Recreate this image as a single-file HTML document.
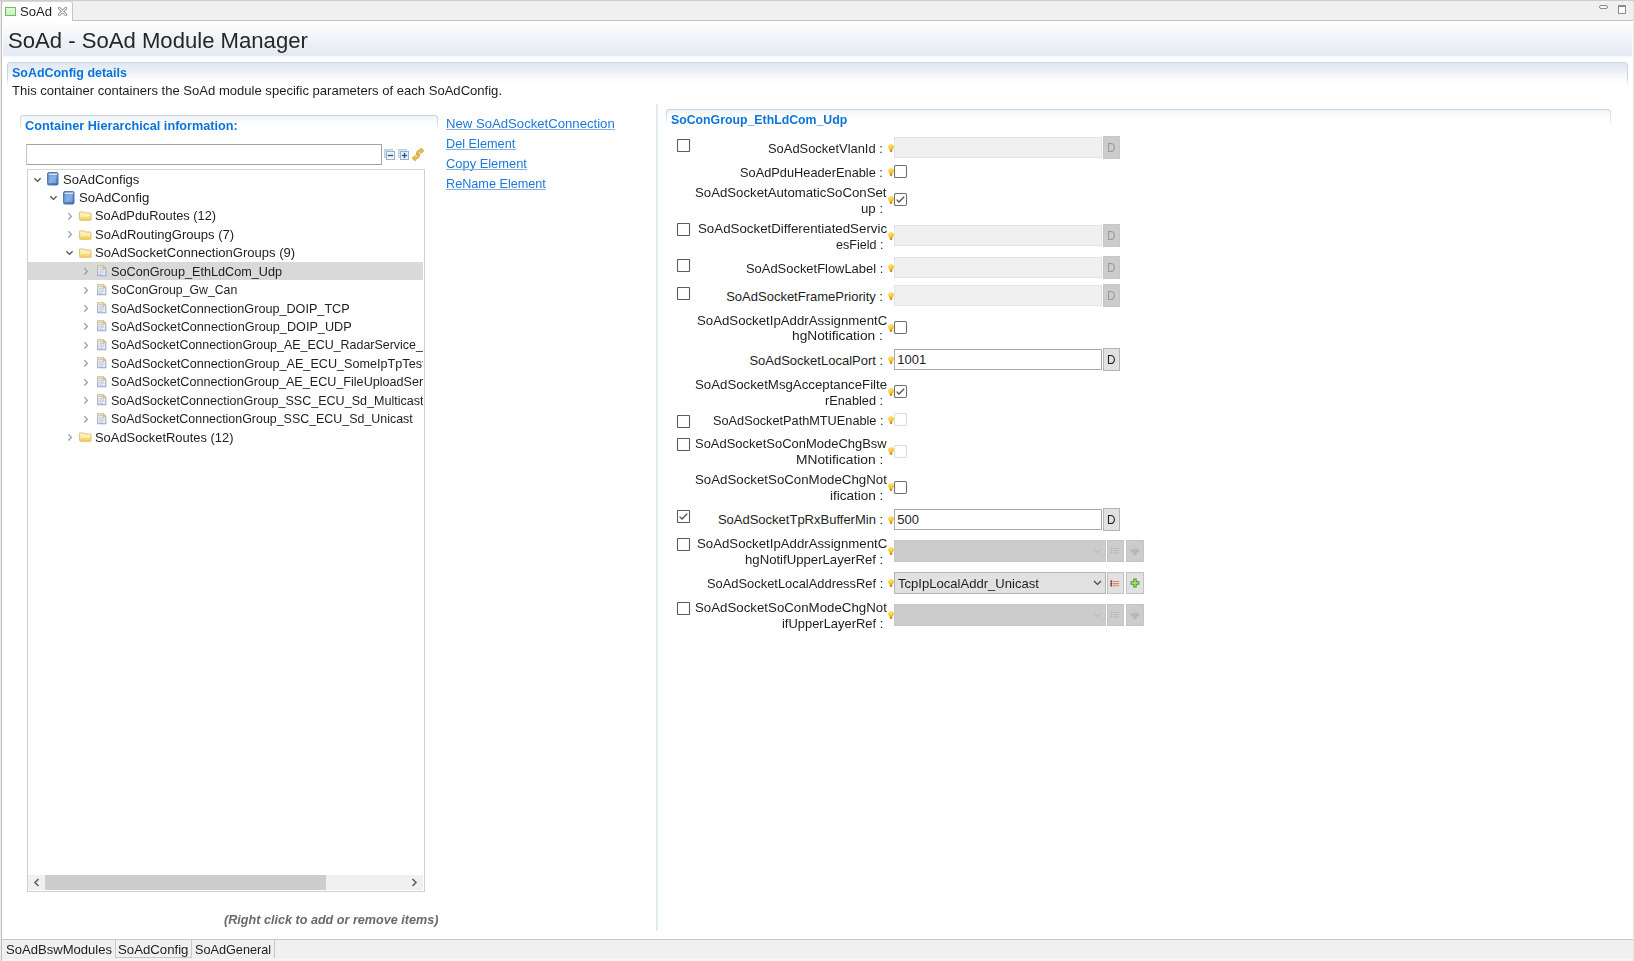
<!DOCTYPE html>
<html><head><meta charset="utf-8"><style>
html,body{margin:0;padding:0;}
body{width:1634px;height:961px;overflow:hidden;position:relative;background:#fff;font-family:"Liberation Sans",sans-serif;}
.a{position:absolute;}
.t{position:absolute;white-space:nowrap;transform-origin:0 0;}
svg.a{overflow:visible}
</style></head><body>
<div class="a" style="left:0px;top:0px;width:1634px;height:1px;background:#cdcdcd"></div>
<div class="a" style="left:0px;top:1px;width:1634px;height:1px;background:#dadada"></div>
<div class="a" style="left:73px;top:1px;width:1560px;height:19px;background:#f0f0f0"></div>
<div class="a" style="left:73px;top:20px;width:1560px;height:1px;background:#c4c4c4"></div>
<div class="a" style="left:1px;top:1px;width:72px;height:20px;background:#fff;border-top:1px solid #d8d8d8;border-left:1px solid #bdbdbd;border-right:1px solid #c4c4c4;border-radius:3px 3px 0 0;box-sizing:border-box;border-bottom:none"></div>
<div class="a" style="left:0px;top:2px;width:1px;height:959px;background:#ececec"></div>
<div class="a" style="left:1px;top:2px;width:1px;height:959px;background:#bdbdbd"></div>
<div class="a" style="left:1633px;top:2px;width:1px;height:959px;background:#e6e6e6"></div>
<div class="a" style="left:5px;top:7px;width:11px;height:9px;border:1px solid #6cc060;background:linear-gradient(#e6f6e0,#c9eebf);box-sizing:border-box"></div>
<div class="t" style="left:19.50px;top:-0.90px;font-size:13px;line-height:26px;color:#1e1e1e;transform:scaleX(1.0079);">SoAd</div>
<svg class="a" style="left:57px;top:6px" width="11" height="11" viewBox="0 0 11 11"><path d="M2.2 2.2 L8.8 8.8 M8.8 2.2 L2.2 8.8" stroke="#8e8e8e" stroke-width="2.8" stroke-linecap="round" fill="none"/><path d="M2.2 2.2 L8.8 8.8 M8.8 2.2 L2.2 8.8" stroke="#fff" stroke-width="1.1" stroke-linecap="round" fill="none"/></svg>
<div class="a" style="left:1599px;top:5px;width:9px;height:4px;border:1px solid #8a8a8a;border-radius:2px;box-sizing:border-box;background:#fafafa"></div>
<div class="a" style="left:1618px;top:5px;width:8px;height:9px;border:1px solid #8a8a8a;border-top-width:2px;border-radius:1px;box-sizing:border-box;background:#fff"></div>
<div class="a" style="left:3px;top:21px;width:1629px;height:37px;background:linear-gradient(#ffffff 0px,#fdfdfe 2px,#e3e9f2 34px,#e6ecf3 34.5px,#f2f5f8 35px,#fcfdfe 37px)"></div>
<div class="t" style="left:8.40px;top:18.50px;font-size:22px;line-height:44px;color:#262626;transform:scaleX(1.0048);">SoAd - SoAd Module Manager</div>
<div class="a" style="left:7px;top:62px;width:1621px;height:28px;border:1px solid #c6d4e4;border-bottom:none;border-radius:3px 3px 0 0;background:linear-gradient(#dfe7f1,#ffffff 75%);box-sizing:border-box;-webkit-mask-image:linear-gradient(#000 55%,transparent 85%)"></div>
<div class="t" style="left:12.20px;top:59.60px;font-size:13px;line-height:26px;font-weight:700;color:#0a74da;transform:scaleX(0.9577);">SoAdConfig details</div>
<div class="t" style="left:12.20px;top:77.60px;font-size:13px;line-height:26px;color:#1e1e1e;transform:scaleX(1.0046);">This container containers the SoAd module specific parameters of each SoAdConfig.</div>
<div class="a" style="left:20px;top:115px;width:418px;height:18px;border:1px solid #c5d3e4;border-bottom:none;border-radius:3px 3px 0 0;background:linear-gradient(#eef3f8,#ffffff 50%);box-sizing:border-box;-webkit-mask-image:linear-gradient(#000 15%,transparent 95%)"></div>
<div class="t" style="left:24.60px;top:113.10px;font-size:13px;line-height:26px;font-weight:700;color:#0a74da;transform:scaleX(0.9756);">Container Hierarchical information:</div>
<div class="a" style="left:26px;top:144px;width:356px;height:21px;border:1px solid #a4a4a4;border-left-color:#c4c4c4;border-radius:1px;background:#fff;box-sizing:border-box"></div>
<svg class="a" style="left:384px;top:148.5px" width="12" height="12" viewBox="0 0 12 12"><rect x="0.5" y="0.5" width="8" height="8" fill="#cfe2f3" stroke="#bcd0e6"/><rect x="2.5" y="2.5" width="8" height="8" fill="#eaf6fd" stroke="#9fb0c6"/><path d="M3.8 6.5 H9.2" stroke="#245b8f" stroke-width="1.4"/></svg>
<svg class="a" style="left:398px;top:148.5px" width="12" height="12" viewBox="0 0 12 12"><rect x="0.5" y="0.5" width="8" height="8" fill="#cfe2f3" stroke="#bcd0e6"/><rect x="2.5" y="2.5" width="8" height="8" fill="#eaf6fd" stroke="#9fb0c6"/><path d="M3.8 6.5 H9.2" stroke="#245b8f" stroke-width="1.4"/><path d="M6.5 3.8 V9.2" stroke="#245b8f" stroke-width="1.4"/></svg>
<svg class="a" style="left:411px;top:147px" width="14" height="15" viewBox="0 0 14 15"><g stroke="#c58f24" stroke-width="0.6" fill="#ebc24a" stroke-linejoin="round"><path d="M5.2 8 C5 4.5 7 2.6 10 2.8 L9.6 1 L13 3.8 L9.8 6.6 L9.9 4.8 C8.2 4.7 7.2 5.8 7.4 8 Z"/><path d="M8.8 7 C9 10.5 7 12.4 4 12.2 L4.4 14 L1 11.2 L4.2 8.4 L4.1 10.2 C5.8 10.3 6.8 9.2 6.6 7 Z"/></g></svg>
<div class="a" style="left:27px;top:169px;width:398px;height:723px;border:1px solid #cfd0d4;border-top-color:#d8d8d8;background:#fff;box-sizing:border-box"></div>
<div class="a" style="left:28px;top:262px;width:395px;height:18px;background:#d9d9d9"></div>
<div class="a" style="left:0;top:0;width:1634px;height:961px;clip-path:inset(170px 1211px 87px 28px)">
<svg class="a" style="left:33px;top:176.5px" width="9" height="6" viewBox="0 0 9 6"><path d="M1.4 1.3 L4.5 4.4 L7.6 1.3" stroke="#505050" stroke-width="1.3" fill="none"/></svg>
<svg class="a" style="left:47px;top:172.3px" width="12" height="14" viewBox="0 0 12 14"><defs><linearGradient id="bk" x1="0" y1="0" x2="1" y2="1"><stop offset="0" stop-color="#5d8fd0"/><stop offset="0.5" stop-color="#77a3dc"/><stop offset="1" stop-color="#3d6db3"/></linearGradient></defs><rect x="0.6" y="0.6" width="10.4" height="12.4" rx="1.2" fill="url(#bk)" stroke="#4a72ab" stroke-width="1"/><rect x="1.8" y="1.7" width="8.2" height="1.2" fill="#e9f0f9"/><rect x="2.6" y="3.6" width="6.5" height="8" fill="#9cc0ea" opacity="0.45"/><rect x="0.8" y="11" width="10" height="1.6" fill="#3f6aa8" opacity="0.6"/></svg>
<div class="t" style="left:63.00px;top:166.60px;font-size:13px;line-height:26px;color:#1e1e1e;transform:scaleX(1.0069);">SoAdConfigs</div>
<svg class="a" style="left:49px;top:194.9px" width="9" height="6" viewBox="0 0 9 6"><path d="M1.4 1.3 L4.5 4.4 L7.6 1.3" stroke="#505050" stroke-width="1.3" fill="none"/></svg>
<svg class="a" style="left:63px;top:190.7px" width="12" height="14" viewBox="0 0 12 14"><defs><linearGradient id="bk" x1="0" y1="0" x2="1" y2="1"><stop offset="0" stop-color="#5d8fd0"/><stop offset="0.5" stop-color="#77a3dc"/><stop offset="1" stop-color="#3d6db3"/></linearGradient></defs><rect x="0.6" y="0.6" width="10.4" height="12.4" rx="1.2" fill="url(#bk)" stroke="#4a72ab" stroke-width="1"/><rect x="1.8" y="1.7" width="8.2" height="1.2" fill="#e9f0f9"/><rect x="2.6" y="3.6" width="6.5" height="8" fill="#9cc0ea" opacity="0.45"/><rect x="0.8" y="11" width="10" height="1.6" fill="#3f6aa8" opacity="0.6"/></svg>
<div class="t" style="left:79.00px;top:185.03px;font-size:13px;line-height:26px;color:#1e1e1e;transform:scaleX(1.0133);">SoAdConfig</div>
<svg class="a" style="left:67px;top:211.9px" width="6" height="9" viewBox="0 0 6 9"><path d="M1.4 1.3 L4.4 4.4 L1.4 7.5" stroke="#9c9c9c" stroke-width="1.25" fill="none"/></svg>
<svg class="a" style="left:79px;top:211.2px" width="13" height="10" viewBox="0 0 13 10"><defs><linearGradient id="fd" x1="0" y1="0" x2="0" y2="1"><stop offset="0" stop-color="#fdf8e6"/><stop offset="0.45" stop-color="#faeaa0"/><stop offset="1" stop-color="#f2cf3c"/></linearGradient></defs><path d="M0.6 1 H5 L6 2 H11.4 Q12 2 12 2.6 V8.6 Q12 9.3 11.3 9.3 H1.3 Q0.6 9.3 0.6 8.6 Z" fill="url(#fd)" stroke="#e5bd78" stroke-width="1"/><path d="M1.6 5.2 Q4 5.6 6 4.4 H11" stroke="#fff6d0" stroke-width="1" fill="none"/></svg>
<div class="t" style="left:95.00px;top:203.46px;font-size:13px;line-height:26px;color:#1e1e1e;transform:scaleX(0.9856);">SoAdPduRoutes (12)</div>
<svg class="a" style="left:67px;top:230.3px" width="6" height="9" viewBox="0 0 6 9"><path d="M1.4 1.3 L4.4 4.4 L1.4 7.5" stroke="#9c9c9c" stroke-width="1.25" fill="none"/></svg>
<svg class="a" style="left:79px;top:229.6px" width="13" height="10" viewBox="0 0 13 10"><defs><linearGradient id="fd" x1="0" y1="0" x2="0" y2="1"><stop offset="0" stop-color="#fdf8e6"/><stop offset="0.45" stop-color="#faeaa0"/><stop offset="1" stop-color="#f2cf3c"/></linearGradient></defs><path d="M0.6 1 H5 L6 2 H11.4 Q12 2 12 2.6 V8.6 Q12 9.3 11.3 9.3 H1.3 Q0.6 9.3 0.6 8.6 Z" fill="url(#fd)" stroke="#e5bd78" stroke-width="1"/><path d="M1.6 5.2 Q4 5.6 6 4.4 H11" stroke="#fff6d0" stroke-width="1" fill="none"/></svg>
<div class="t" style="left:95.00px;top:221.89px;font-size:13px;line-height:26px;color:#1e1e1e;transform:scaleX(1.0032);">SoAdRoutingGroups (7)</div>
<svg class="a" style="left:65px;top:250.2px" width="9" height="6" viewBox="0 0 9 6"><path d="M1.4 1.3 L4.5 4.4 L7.6 1.3" stroke="#505050" stroke-width="1.3" fill="none"/></svg>
<svg class="a" style="left:79px;top:248.0px" width="13" height="10" viewBox="0 0 13 10"><defs><linearGradient id="fd" x1="0" y1="0" x2="0" y2="1"><stop offset="0" stop-color="#fdf8e6"/><stop offset="0.45" stop-color="#faeaa0"/><stop offset="1" stop-color="#f2cf3c"/></linearGradient></defs><path d="M0.6 1 H5 L6 2 H11.4 Q12 2 12 2.6 V8.6 Q12 9.3 11.3 9.3 H1.3 Q0.6 9.3 0.6 8.6 Z" fill="url(#fd)" stroke="#e5bd78" stroke-width="1"/><path d="M1.6 5.2 Q4 5.6 6 4.4 H11" stroke="#fff6d0" stroke-width="1" fill="none"/></svg>
<div class="t" style="left:95.00px;top:240.32px;font-size:13px;line-height:26px;color:#1e1e1e;transform:scaleX(1.0035);">SoAdSocketConnectionGroups (9)</div>
<svg class="a" style="left:83px;top:267.1px" width="6" height="9" viewBox="0 0 6 9"><path d="M1.4 1.3 L4.4 4.4 L1.4 7.5" stroke="#9c9c9c" stroke-width="1.25" fill="none"/></svg>
<svg class="a" style="left:97px;top:265.1px" width="10" height="12" viewBox="0 0 10 12"><defs><linearGradient id="fs" x1="0" y1="0" x2="0" y2="1"><stop offset="0" stop-color="#cdb77c"/><stop offset="1" stop-color="#93a5c8"/></linearGradient></defs><path d="M0.7 0.7 H6.3 L8.8 3.2 V10.8 H0.7 Z" fill="#edf2fa" stroke="url(#fs)" stroke-width="1.1"/><path d="M6 0.9 V3.5 H8.6" fill="#e0bf6a" stroke="#d2b46e" stroke-width="0.8"/><path d="M2.2 2.6 H5 M2.2 4.8 H7.3 M2.2 7 H7.3 M2.2 9.2 H6" stroke="#a8b8d8" stroke-width="0.9"/></svg>
<div class="t" style="left:111.00px;top:258.75px;font-size:13px;line-height:26px;color:#1e1e1e;transform:scaleX(0.9742);">SoConGroup_EthLdCom_Udp</div>
<svg class="a" style="left:83px;top:285.6px" width="6" height="9" viewBox="0 0 6 9"><path d="M1.4 1.3 L4.4 4.4 L1.4 7.5" stroke="#9c9c9c" stroke-width="1.25" fill="none"/></svg>
<svg class="a" style="left:97px;top:283.6px" width="10" height="12" viewBox="0 0 10 12"><defs><linearGradient id="fs" x1="0" y1="0" x2="0" y2="1"><stop offset="0" stop-color="#cdb77c"/><stop offset="1" stop-color="#93a5c8"/></linearGradient></defs><path d="M0.7 0.7 H6.3 L8.8 3.2 V10.8 H0.7 Z" fill="#edf2fa" stroke="url(#fs)" stroke-width="1.1"/><path d="M6 0.9 V3.5 H8.6" fill="#e0bf6a" stroke="#d2b46e" stroke-width="0.8"/><path d="M2.2 2.6 H5 M2.2 4.8 H7.3 M2.2 7 H7.3 M2.2 9.2 H6" stroke="#a8b8d8" stroke-width="0.9"/></svg>
<div class="t" style="left:111.00px;top:277.18px;font-size:13px;line-height:26px;color:#1e1e1e;transform:scaleX(0.9443);">SoConGroup_Gw_Can</div>
<svg class="a" style="left:83px;top:304.0px" width="6" height="9" viewBox="0 0 6 9"><path d="M1.4 1.3 L4.4 4.4 L1.4 7.5" stroke="#9c9c9c" stroke-width="1.25" fill="none"/></svg>
<svg class="a" style="left:97px;top:302.0px" width="10" height="12" viewBox="0 0 10 12"><defs><linearGradient id="fs" x1="0" y1="0" x2="0" y2="1"><stop offset="0" stop-color="#cdb77c"/><stop offset="1" stop-color="#93a5c8"/></linearGradient></defs><path d="M0.7 0.7 H6.3 L8.8 3.2 V10.8 H0.7 Z" fill="#edf2fa" stroke="url(#fs)" stroke-width="1.1"/><path d="M6 0.9 V3.5 H8.6" fill="#e0bf6a" stroke="#d2b46e" stroke-width="0.8"/><path d="M2.2 2.6 H5 M2.2 4.8 H7.3 M2.2 7 H7.3 M2.2 9.2 H6" stroke="#a8b8d8" stroke-width="0.9"/></svg>
<div class="t" style="left:111.00px;top:295.61px;font-size:13px;line-height:26px;color:#1e1e1e;transform:scaleX(0.9713);">SoAdSocketConnectionGroup_DOIP_TCP</div>
<svg class="a" style="left:83px;top:322.4px" width="6" height="9" viewBox="0 0 6 9"><path d="M1.4 1.3 L4.4 4.4 L1.4 7.5" stroke="#9c9c9c" stroke-width="1.25" fill="none"/></svg>
<svg class="a" style="left:97px;top:320.4px" width="10" height="12" viewBox="0 0 10 12"><defs><linearGradient id="fs" x1="0" y1="0" x2="0" y2="1"><stop offset="0" stop-color="#cdb77c"/><stop offset="1" stop-color="#93a5c8"/></linearGradient></defs><path d="M0.7 0.7 H6.3 L8.8 3.2 V10.8 H0.7 Z" fill="#edf2fa" stroke="url(#fs)" stroke-width="1.1"/><path d="M6 0.9 V3.5 H8.6" fill="#e0bf6a" stroke="#d2b46e" stroke-width="0.8"/><path d="M2.2 2.6 H5 M2.2 4.8 H7.3 M2.2 7 H7.3 M2.2 9.2 H6" stroke="#a8b8d8" stroke-width="0.9"/></svg>
<div class="t" style="left:111.00px;top:314.04px;font-size:13px;line-height:26px;color:#1e1e1e;transform:scaleX(0.9736);">SoAdSocketConnectionGroup_DOIP_UDP</div>
<svg class="a" style="left:83px;top:340.9px" width="6" height="9" viewBox="0 0 6 9"><path d="M1.4 1.3 L4.4 4.4 L1.4 7.5" stroke="#9c9c9c" stroke-width="1.25" fill="none"/></svg>
<svg class="a" style="left:97px;top:338.9px" width="10" height="12" viewBox="0 0 10 12"><defs><linearGradient id="fs" x1="0" y1="0" x2="0" y2="1"><stop offset="0" stop-color="#cdb77c"/><stop offset="1" stop-color="#93a5c8"/></linearGradient></defs><path d="M0.7 0.7 H6.3 L8.8 3.2 V10.8 H0.7 Z" fill="#edf2fa" stroke="url(#fs)" stroke-width="1.1"/><path d="M6 0.9 V3.5 H8.6" fill="#e0bf6a" stroke="#d2b46e" stroke-width="0.8"/><path d="M2.2 2.6 H5 M2.2 4.8 H7.3 M2.2 7 H7.3 M2.2 9.2 H6" stroke="#a8b8d8" stroke-width="0.9"/></svg>
<div class="t" style="left:111.00px;top:332.47px;font-size:13px;line-height:26px;color:#1e1e1e;transform:scaleX(0.9569);">SoAdSocketConnectionGroup_AE_ECU_RadarService_Provider</div>
<svg class="a" style="left:83px;top:359.3px" width="6" height="9" viewBox="0 0 6 9"><path d="M1.4 1.3 L4.4 4.4 L1.4 7.5" stroke="#9c9c9c" stroke-width="1.25" fill="none"/></svg>
<svg class="a" style="left:97px;top:357.3px" width="10" height="12" viewBox="0 0 10 12"><defs><linearGradient id="fs" x1="0" y1="0" x2="0" y2="1"><stop offset="0" stop-color="#cdb77c"/><stop offset="1" stop-color="#93a5c8"/></linearGradient></defs><path d="M0.7 0.7 H6.3 L8.8 3.2 V10.8 H0.7 Z" fill="#edf2fa" stroke="url(#fs)" stroke-width="1.1"/><path d="M6 0.9 V3.5 H8.6" fill="#e0bf6a" stroke="#d2b46e" stroke-width="0.8"/><path d="M2.2 2.6 H5 M2.2 4.8 H7.3 M2.2 7 H7.3 M2.2 9.2 H6" stroke="#a8b8d8" stroke-width="0.9"/></svg>
<div class="t" style="left:111.00px;top:350.90px;font-size:13px;line-height:26px;color:#1e1e1e;transform:scaleX(0.9715);">SoAdSocketConnectionGroup_AE_ECU_SomeIpTpTest</div>
<svg class="a" style="left:83px;top:377.7px" width="6" height="9" viewBox="0 0 6 9"><path d="M1.4 1.3 L4.4 4.4 L1.4 7.5" stroke="#9c9c9c" stroke-width="1.25" fill="none"/></svg>
<svg class="a" style="left:97px;top:375.7px" width="10" height="12" viewBox="0 0 10 12"><defs><linearGradient id="fs" x1="0" y1="0" x2="0" y2="1"><stop offset="0" stop-color="#cdb77c"/><stop offset="1" stop-color="#93a5c8"/></linearGradient></defs><path d="M0.7 0.7 H6.3 L8.8 3.2 V10.8 H0.7 Z" fill="#edf2fa" stroke="url(#fs)" stroke-width="1.1"/><path d="M6 0.9 V3.5 H8.6" fill="#e0bf6a" stroke="#d2b46e" stroke-width="0.8"/><path d="M2.2 2.6 H5 M2.2 4.8 H7.3 M2.2 7 H7.3 M2.2 9.2 H6" stroke="#a8b8d8" stroke-width="0.9"/></svg>
<div class="t" style="left:111.00px;top:369.33px;font-size:13px;line-height:26px;color:#1e1e1e;transform:scaleX(0.9684);">SoAdSocketConnectionGroup_AE_ECU_FileUploadService</div>
<svg class="a" style="left:83px;top:396.2px" width="6" height="9" viewBox="0 0 6 9"><path d="M1.4 1.3 L4.4 4.4 L1.4 7.5" stroke="#9c9c9c" stroke-width="1.25" fill="none"/></svg>
<svg class="a" style="left:97px;top:394.2px" width="10" height="12" viewBox="0 0 10 12"><defs><linearGradient id="fs" x1="0" y1="0" x2="0" y2="1"><stop offset="0" stop-color="#cdb77c"/><stop offset="1" stop-color="#93a5c8"/></linearGradient></defs><path d="M0.7 0.7 H6.3 L8.8 3.2 V10.8 H0.7 Z" fill="#edf2fa" stroke="url(#fs)" stroke-width="1.1"/><path d="M6 0.9 V3.5 H8.6" fill="#e0bf6a" stroke="#d2b46e" stroke-width="0.8"/><path d="M2.2 2.6 H5 M2.2 4.8 H7.3 M2.2 7 H7.3 M2.2 9.2 H6" stroke="#a8b8d8" stroke-width="0.9"/></svg>
<div class="t" style="left:111.00px;top:387.76px;font-size:13px;line-height:26px;color:#1e1e1e;transform:scaleX(0.9653);">SoAdSocketConnectionGroup_SSC_ECU_Sd_Multicast</div>
<svg class="a" style="left:83px;top:414.6px" width="6" height="9" viewBox="0 0 6 9"><path d="M1.4 1.3 L4.4 4.4 L1.4 7.5" stroke="#9c9c9c" stroke-width="1.25" fill="none"/></svg>
<svg class="a" style="left:97px;top:412.6px" width="10" height="12" viewBox="0 0 10 12"><defs><linearGradient id="fs" x1="0" y1="0" x2="0" y2="1"><stop offset="0" stop-color="#cdb77c"/><stop offset="1" stop-color="#93a5c8"/></linearGradient></defs><path d="M0.7 0.7 H6.3 L8.8 3.2 V10.8 H0.7 Z" fill="#edf2fa" stroke="url(#fs)" stroke-width="1.1"/><path d="M6 0.9 V3.5 H8.6" fill="#e0bf6a" stroke="#d2b46e" stroke-width="0.8"/><path d="M2.2 2.6 H5 M2.2 4.8 H7.3 M2.2 7 H7.3 M2.2 9.2 H6" stroke="#a8b8d8" stroke-width="0.9"/></svg>
<div class="t" style="left:111.00px;top:406.19px;font-size:13px;line-height:26px;color:#1e1e1e;transform:scaleX(0.9554);">SoAdSocketConnectionGroup_SSC_ECU_Sd_Unicast</div>
<svg class="a" style="left:67px;top:433.0px" width="6" height="9" viewBox="0 0 6 9"><path d="M1.4 1.3 L4.4 4.4 L1.4 7.5" stroke="#9c9c9c" stroke-width="1.25" fill="none"/></svg>
<svg class="a" style="left:79px;top:432.3px" width="13" height="10" viewBox="0 0 13 10"><defs><linearGradient id="fd" x1="0" y1="0" x2="0" y2="1"><stop offset="0" stop-color="#fdf8e6"/><stop offset="0.45" stop-color="#faeaa0"/><stop offset="1" stop-color="#f2cf3c"/></linearGradient></defs><path d="M0.6 1 H5 L6 2 H11.4 Q12 2 12 2.6 V8.6 Q12 9.3 11.3 9.3 H1.3 Q0.6 9.3 0.6 8.6 Z" fill="url(#fd)" stroke="#e5bd78" stroke-width="1"/><path d="M1.6 5.2 Q4 5.6 6 4.4 H11" stroke="#fff6d0" stroke-width="1" fill="none"/></svg>
<div class="t" style="left:95.00px;top:424.62px;font-size:13px;line-height:26px;color:#1e1e1e;transform:scaleX(0.9928);">SoAdSocketRoutes (12)</div>
</div>
<div class="a" style="left:28px;top:875px;width:395px;height:15px;background:#f0f0f0"></div>
<div class="a" style="left:45px;top:875px;width:281px;height:15px;background:#cdcdcd"></div>
<svg class="a" style="left:33px;top:878px" width="7" height="9" viewBox="0 0 7 9"><path d="M5.5 1 L2 4.5 L5.5 8" stroke="#606060" stroke-width="1.6" fill="none"/></svg>
<svg class="a" style="left:411px;top:878px" width="7" height="9" viewBox="0 0 7 9"><path d="M1.5 1 L5 4.5 L1.5 8" stroke="#606060" stroke-width="1.6" fill="none"/></svg>
<div class="t" style="left:223.70px;top:906.80px;font-size:13px;line-height:26px;font-weight:700;font-style:italic;color:#6a6a6a;transform:scaleX(0.9701);">(Right click to add or remove items)</div>
<div class="t" style="left:445.90px;top:110.90px;font-size:13px;line-height:26px;color:#1e78dc;transform:scaleX(1.0108);">New SoAdSocketConnection</div>
<div class="a" style="left:446px;top:128.5px;width:169.0px;height:1.4000000000000057px;background:#86b4e8"></div>
<div class="t" style="left:445.90px;top:130.90px;font-size:13px;line-height:26px;color:#1e78dc;transform:scaleX(0.9778);">Del Element</div>
<div class="a" style="left:446px;top:148.5px;width:69.5px;height:1.4000000000000057px;background:#86b4e8"></div>
<div class="t" style="left:445.90px;top:150.90px;font-size:13px;line-height:26px;color:#1e78dc;transform:scaleX(0.9911);">Copy Element</div>
<div class="a" style="left:446px;top:168.5px;width:81.10000000000002px;height:1.4000000000000057px;background:#86b4e8"></div>
<div class="t" style="left:445.90px;top:170.90px;font-size:13px;line-height:26px;color:#1e78dc;transform:scaleX(0.9734);">ReName Element</div>
<div class="a" style="left:446px;top:188.5px;width:100.10000000000002px;height:1.4000000000000057px;background:#86b4e8"></div>
<div class="a" style="left:656px;top:104px;width:2px;height:827px;background:#e1e9f3"></div>
<div class="a" style="left:666px;top:109px;width:945px;height:18px;border:1px solid #c5d3e4;border-bottom:none;border-radius:3px 3px 0 0;background:linear-gradient(#eef3f8,#ffffff 50%);box-sizing:border-box;-webkit-mask-image:linear-gradient(#000 15%,transparent 95%)"></div>
<div class="t" style="left:671.20px;top:107.10px;font-size:13px;line-height:26px;font-weight:700;color:#0a74da;transform:scaleX(0.9459);">SoConGroup_EthLdCom_Udp</div>
<div class="a" style="left:2px;top:939px;width:1631px;height:1px;background:#c8c8c8"></div>
<div class="a" style="left:2px;top:940px;width:1631px;height:19px;background:#f0f0f0"></div>
<div class="a" style="left:2px;top:959px;width:1631px;height:2px;background:#f7f7f7"></div>
<div class="a" style="left:115px;top:940px;width:1px;height:18px;background:#c8c8c8"></div>
<div class="a" style="left:191px;top:940px;width:1px;height:18px;background:#c8c8c8"></div>
<div class="a" style="left:274px;top:940px;width:1px;height:18px;background:#c8c8c8"></div>
<div class="a" style="left:116px;top:957px;width:75px;height:1px;background:#c8c8c8"></div>
<div class="t" style="left:6.20px;top:936.60px;font-size:13px;line-height:26px;color:#1e1e1e;transform:scaleX(1.0047);">SoAdBswModules</div>
<div class="t" style="left:118.20px;top:936.60px;font-size:13px;line-height:26px;color:#1e1e1e;transform:scaleX(1.0148);">SoAdConfig</div>
<div class="t" style="left:195.20px;top:936.60px;font-size:13px;line-height:26px;color:#1e1e1e;transform:scaleX(0.9744);">SoAdGeneral</div>
<svg class="a" style="left:677px;top:139px" width="13" height="13" viewBox="0 0 13 13"><rect x="0.5" y="0.5" width="12" height="12" rx="0.4" fill="#fff" stroke="#5c5c5c" stroke-width="1.1"/></svg>
<div class="t" style="left:768.40px;top:135.60px;font-size:13px;line-height:26px;color:#1e1e1e;transform:scaleX(0.9929);">SoAdSocketVlanId :</div>
<div class="a" style="left:894px;top:137px;width:208px;height:21px;border:1px solid #e3e3e3;background:#f0f0f0;box-sizing:border-box"></div>
<div class="a" style="left:1103px;top:136px;width:17px;height:23px;border:1px solid #c6c6c6;background:#cccccc;box-sizing:border-box"></div>
<div class="t" style="left:1106.50px;top:135.20px;font-size:13px;line-height:26px;color:#9a9a9a;transform:scaleX(0.9067);">D</div>
<svg class="a" style="left:887.5px;top:143.5px" width="6" height="8" viewBox="0 0 6 8"><defs><radialGradient id="bl" cx="0.4" cy="0.3" r="0.7"><stop offset="0" stop-color="#ffe27a"/><stop offset="1" stop-color="#f7b800"/></radialGradient></defs><path d="M3 0.2 C4.8 0.2 5.8 1.5 5.8 2.9 C5.8 4.2 4.6 5 4.3 5.9 H1.7 C1.4 5 0.2 4.2 0.2 2.9 C0.2 1.5 1.2 0.2 3 0.2 Z" fill="url(#bl)"/><rect x="1.7" y="5.8" width="2.6" height="1.4" fill="#c88a30"/><rect x="2.1" y="7.1" width="1.8" height="0.8" fill="#8a7a6a"/></svg>
<div class="t" style="left:740.30px;top:159.60px;font-size:13px;line-height:26px;color:#1e1e1e;transform:scaleX(0.9838);">SoAdPduHeaderEnable :</div>
<svg class="a" style="left:894px;top:165px" width="13" height="13" viewBox="0 0 13 13"><rect x="0.5" y="0.5" width="12" height="12" rx="1.2" fill="#fff" stroke="#6f6f6f" stroke-width="1.1"/></svg>
<svg class="a" style="left:887.5px;top:167.8px" width="6" height="8" viewBox="0 0 6 8"><defs><radialGradient id="bl" cx="0.4" cy="0.3" r="0.7"><stop offset="0" stop-color="#ffe27a"/><stop offset="1" stop-color="#f7b800"/></radialGradient></defs><path d="M3 0.2 C4.8 0.2 5.8 1.5 5.8 2.9 C5.8 4.2 4.6 5 4.3 5.9 H1.7 C1.4 5 0.2 4.2 0.2 2.9 C0.2 1.5 1.2 0.2 3 0.2 Z" fill="url(#bl)"/><rect x="1.7" y="5.8" width="2.6" height="1.4" fill="#c88a30"/><rect x="2.1" y="7.1" width="1.8" height="0.8" fill="#8a7a6a"/></svg>
<div class="t" style="left:695.30px;top:179.60px;font-size:13px;line-height:26px;color:#1e1e1e;transform:scaleX(1.0152);">SoAdSocketAutomaticSoConSet</div>
<div class="t" style="left:861.20px;top:195.60px;font-size:13px;line-height:26px;color:#1e1e1e;transform:scaleX(1.0173);">up :</div>
<svg class="a" style="left:894px;top:193px" width="13" height="13" viewBox="0 0 13 13"><rect x="0.5" y="0.5" width="12" height="12" rx="1.2" fill="#fff" stroke="#6f6f6f" stroke-width="1.1"/><path d="M2.6 6.6 L5 9 L10.2 3.8" stroke="#505050" stroke-width="1.3" fill="none"/></svg>
<svg class="a" style="left:887.5px;top:195.8px" width="6" height="8" viewBox="0 0 6 8"><defs><radialGradient id="bl" cx="0.4" cy="0.3" r="0.7"><stop offset="0" stop-color="#ffe27a"/><stop offset="1" stop-color="#f7b800"/></radialGradient></defs><path d="M3 0.2 C4.8 0.2 5.8 1.5 5.8 2.9 C5.8 4.2 4.6 5 4.3 5.9 H1.7 C1.4 5 0.2 4.2 0.2 2.9 C0.2 1.5 1.2 0.2 3 0.2 Z" fill="url(#bl)"/><rect x="1.7" y="5.8" width="2.6" height="1.4" fill="#c88a30"/><rect x="2.1" y="7.1" width="1.8" height="0.8" fill="#8a7a6a"/></svg>
<svg class="a" style="left:677px;top:223px" width="13" height="13" viewBox="0 0 13 13"><rect x="0.5" y="0.5" width="12" height="12" rx="0.4" fill="#fff" stroke="#5c5c5c" stroke-width="1.1"/></svg>
<div class="t" style="left:697.70px;top:215.80px;font-size:13px;line-height:26px;color:#1e1e1e;transform:scaleX(1.0235);">SoAdSocketDifferentiatedServic</div>
<div class="t" style="left:835.80px;top:231.80px;font-size:13px;line-height:26px;color:#1e1e1e;transform:scaleX(0.9649);">esField :</div>
<div class="a" style="left:894px;top:225px;width:208px;height:21px;border:1px solid #e3e3e3;background:#f0f0f0;box-sizing:border-box"></div>
<div class="a" style="left:1103px;top:224px;width:17px;height:23px;border:1px solid #c6c6c6;background:#cccccc;box-sizing:border-box"></div>
<div class="t" style="left:1106.50px;top:223.20px;font-size:13px;line-height:26px;color:#9a9a9a;transform:scaleX(0.9067);">D</div>
<svg class="a" style="left:887.5px;top:231.5px" width="6" height="8" viewBox="0 0 6 8"><defs><radialGradient id="bl" cx="0.4" cy="0.3" r="0.7"><stop offset="0" stop-color="#ffe27a"/><stop offset="1" stop-color="#f7b800"/></radialGradient></defs><path d="M3 0.2 C4.8 0.2 5.8 1.5 5.8 2.9 C5.8 4.2 4.6 5 4.3 5.9 H1.7 C1.4 5 0.2 4.2 0.2 2.9 C0.2 1.5 1.2 0.2 3 0.2 Z" fill="url(#bl)"/><rect x="1.7" y="5.8" width="2.6" height="1.4" fill="#c88a30"/><rect x="2.1" y="7.1" width="1.8" height="0.8" fill="#8a7a6a"/></svg>
<svg class="a" style="left:677px;top:259px" width="13" height="13" viewBox="0 0 13 13"><rect x="0.5" y="0.5" width="12" height="12" rx="0.4" fill="#fff" stroke="#5c5c5c" stroke-width="1.1"/></svg>
<div class="t" style="left:746.00px;top:255.80px;font-size:13px;line-height:26px;color:#1e1e1e;transform:scaleX(0.9942);">SoAdSocketFlowLabel :</div>
<div class="a" style="left:894px;top:257px;width:208px;height:21px;border:1px solid #e3e3e3;background:#f0f0f0;box-sizing:border-box"></div>
<div class="a" style="left:1103px;top:256px;width:17px;height:23px;border:1px solid #c6c6c6;background:#cccccc;box-sizing:border-box"></div>
<div class="t" style="left:1106.50px;top:255.20px;font-size:13px;line-height:26px;color:#9a9a9a;transform:scaleX(0.9067);">D</div>
<svg class="a" style="left:887.5px;top:263.5px" width="6" height="8" viewBox="0 0 6 8"><defs><radialGradient id="bl" cx="0.4" cy="0.3" r="0.7"><stop offset="0" stop-color="#ffe27a"/><stop offset="1" stop-color="#f7b800"/></radialGradient></defs><path d="M3 0.2 C4.8 0.2 5.8 1.5 5.8 2.9 C5.8 4.2 4.6 5 4.3 5.9 H1.7 C1.4 5 0.2 4.2 0.2 2.9 C0.2 1.5 1.2 0.2 3 0.2 Z" fill="url(#bl)"/><rect x="1.7" y="5.8" width="2.6" height="1.4" fill="#c88a30"/><rect x="2.1" y="7.1" width="1.8" height="0.8" fill="#8a7a6a"/></svg>
<svg class="a" style="left:677px;top:287px" width="13" height="13" viewBox="0 0 13 13"><rect x="0.5" y="0.5" width="12" height="12" rx="0.4" fill="#fff" stroke="#5c5c5c" stroke-width="1.1"/></svg>
<div class="t" style="left:726.20px;top:283.90px;font-size:13px;line-height:26px;color:#1e1e1e;">SoAdSocketFramePriority :</div>
<div class="a" style="left:894px;top:285px;width:208px;height:21px;border:1px solid #e3e3e3;background:#f0f0f0;box-sizing:border-box"></div>
<div class="a" style="left:1103px;top:284px;width:17px;height:23px;border:1px solid #c6c6c6;background:#cccccc;box-sizing:border-box"></div>
<div class="t" style="left:1106.50px;top:283.20px;font-size:13px;line-height:26px;color:#9a9a9a;transform:scaleX(0.9067);">D</div>
<svg class="a" style="left:887.5px;top:291.5px" width="6" height="8" viewBox="0 0 6 8"><defs><radialGradient id="bl" cx="0.4" cy="0.3" r="0.7"><stop offset="0" stop-color="#ffe27a"/><stop offset="1" stop-color="#f7b800"/></radialGradient></defs><path d="M3 0.2 C4.8 0.2 5.8 1.5 5.8 2.9 C5.8 4.2 4.6 5 4.3 5.9 H1.7 C1.4 5 0.2 4.2 0.2 2.9 C0.2 1.5 1.2 0.2 3 0.2 Z" fill="url(#bl)"/><rect x="1.7" y="5.8" width="2.6" height="1.4" fill="#c88a30"/><rect x="2.1" y="7.1" width="1.8" height="0.8" fill="#8a7a6a"/></svg>
<div class="t" style="left:696.60px;top:307.80px;font-size:13px;line-height:26px;color:#1e1e1e;transform:scaleX(1.0164);">SoAdSocketIpAddrAssignmentC</div>
<div class="t" style="left:792.40px;top:323.30px;font-size:13px;line-height:26px;color:#1e1e1e;transform:scaleX(1.0558);">hgNotification :</div>
<svg class="a" style="left:894px;top:321px" width="13" height="13" viewBox="0 0 13 13"><rect x="0.5" y="0.5" width="12" height="12" rx="1.2" fill="#fff" stroke="#6f6f6f" stroke-width="1.1"/></svg>
<svg class="a" style="left:887.5px;top:323.9px" width="6" height="8" viewBox="0 0 6 8"><defs><radialGradient id="bl" cx="0.4" cy="0.3" r="0.7"><stop offset="0" stop-color="#ffe27a"/><stop offset="1" stop-color="#f7b800"/></radialGradient></defs><path d="M3 0.2 C4.8 0.2 5.8 1.5 5.8 2.9 C5.8 4.2 4.6 5 4.3 5.9 H1.7 C1.4 5 0.2 4.2 0.2 2.9 C0.2 1.5 1.2 0.2 3 0.2 Z" fill="url(#bl)"/><rect x="1.7" y="5.8" width="2.6" height="1.4" fill="#c88a30"/><rect x="2.1" y="7.1" width="1.8" height="0.8" fill="#8a7a6a"/></svg>
<div class="t" style="left:749.40px;top:348.00px;font-size:13px;line-height:26px;color:#1e1e1e;">SoAdSocketLocalPort :</div>
<div class="a" style="left:894px;top:349px;width:208px;height:21px;border:1px solid #a8a8a8;background:#fff;box-sizing:border-box"></div>
<div class="a" style="left:1103px;top:348px;width:17px;height:23px;border:1px solid #b4b4b4;background:#e1e1e1;box-sizing:border-box"></div>
<div class="t" style="left:1106.50px;top:347.20px;font-size:13px;line-height:26px;color:#202020;transform:scaleX(0.9067);">D</div>
<div class="t" style="left:897.20px;top:347.20px;font-size:13px;line-height:26px;color:#1e1e1e;">1001</div>
<svg class="a" style="left:887.5px;top:355.5px" width="6" height="8" viewBox="0 0 6 8"><defs><radialGradient id="bl" cx="0.4" cy="0.3" r="0.7"><stop offset="0" stop-color="#ffe27a"/><stop offset="1" stop-color="#f7b800"/></radialGradient></defs><path d="M3 0.2 C4.8 0.2 5.8 1.5 5.8 2.9 C5.8 4.2 4.6 5 4.3 5.9 H1.7 C1.4 5 0.2 4.2 0.2 2.9 C0.2 1.5 1.2 0.2 3 0.2 Z" fill="url(#bl)"/><rect x="1.7" y="5.8" width="2.6" height="1.4" fill="#c88a30"/><rect x="2.1" y="7.1" width="1.8" height="0.8" fill="#8a7a6a"/></svg>
<div class="t" style="left:694.70px;top:371.80px;font-size:13px;line-height:26px;color:#1e1e1e;transform:scaleX(1.0184);">SoAdSocketMsgAcceptanceFilte</div>
<div class="t" style="left:825.10px;top:387.60px;font-size:13px;line-height:26px;color:#1e1e1e;transform:scaleX(0.9806);">rEnabled :</div>
<svg class="a" style="left:894px;top:385px" width="13" height="13" viewBox="0 0 13 13"><rect x="0.5" y="0.5" width="12" height="12" rx="1.2" fill="#fff" stroke="#6f6f6f" stroke-width="1.1"/><path d="M2.6 6.6 L5 9 L10.2 3.8" stroke="#505050" stroke-width="1.3" fill="none"/></svg>
<svg class="a" style="left:887.5px;top:387.6px" width="6" height="8" viewBox="0 0 6 8"><defs><radialGradient id="bl" cx="0.4" cy="0.3" r="0.7"><stop offset="0" stop-color="#ffe27a"/><stop offset="1" stop-color="#f7b800"/></radialGradient></defs><path d="M3 0.2 C4.8 0.2 5.8 1.5 5.8 2.9 C5.8 4.2 4.6 5 4.3 5.9 H1.7 C1.4 5 0.2 4.2 0.2 2.9 C0.2 1.5 1.2 0.2 3 0.2 Z" fill="url(#bl)"/><rect x="1.7" y="5.8" width="2.6" height="1.4" fill="#c88a30"/><rect x="2.1" y="7.1" width="1.8" height="0.8" fill="#8a7a6a"/></svg>
<svg class="a" style="left:677px;top:415px" width="13" height="13" viewBox="0 0 13 13"><rect x="0.5" y="0.5" width="12" height="12" rx="0.4" fill="#fff" stroke="#5c5c5c" stroke-width="1.1"/></svg>
<div class="t" style="left:712.70px;top:407.80px;font-size:13px;line-height:26px;color:#1e1e1e;transform:scaleX(0.9792);">SoAdSocketPathMTUEnable :</div>
<svg class="a" style="left:894px;top:413px" width="13" height="13" viewBox="0 0 13 13"><rect x="0.5" y="0.5" width="12" height="12" rx="1.2" fill="#fff" stroke="#dcdcdc" stroke-width="1.1"/></svg>
<svg class="a" style="left:887.5px;top:415.9px" width="6" height="8" viewBox="0 0 6 8"><defs><radialGradient id="bl" cx="0.4" cy="0.3" r="0.7"><stop offset="0" stop-color="#ffe27a"/><stop offset="1" stop-color="#f7b800"/></radialGradient></defs><path d="M3 0.2 C4.8 0.2 5.8 1.5 5.8 2.9 C5.8 4.2 4.6 5 4.3 5.9 H1.7 C1.4 5 0.2 4.2 0.2 2.9 C0.2 1.5 1.2 0.2 3 0.2 Z" fill="url(#bl)"/><rect x="1.7" y="5.8" width="2.6" height="1.4" fill="#c88a30"/><rect x="2.1" y="7.1" width="1.8" height="0.8" fill="#8a7a6a"/></svg>
<svg class="a" style="left:677px;top:438px" width="13" height="13" viewBox="0 0 13 13"><rect x="0.5" y="0.5" width="12" height="12" rx="0.4" fill="#fff" stroke="#5c5c5c" stroke-width="1.1"/></svg>
<div class="t" style="left:695.00px;top:430.70px;font-size:13px;line-height:26px;color:#1e1e1e;transform:scaleX(0.9970);">SoAdSocketSoConModeChgBsw</div>
<div class="t" style="left:795.90px;top:446.80px;font-size:13px;line-height:26px;color:#1e1e1e;transform:scaleX(1.0598);">MNotification :</div>
<svg class="a" style="left:894px;top:445px" width="13" height="13" viewBox="0 0 13 13"><rect x="0.5" y="0.5" width="12" height="12" rx="1.2" fill="#fff" stroke="#dcdcdc" stroke-width="1.1"/></svg>
<svg class="a" style="left:887.5px;top:447.4px" width="6" height="8" viewBox="0 0 6 8"><defs><radialGradient id="bl" cx="0.4" cy="0.3" r="0.7"><stop offset="0" stop-color="#ffe27a"/><stop offset="1" stop-color="#f7b800"/></radialGradient></defs><path d="M3 0.2 C4.8 0.2 5.8 1.5 5.8 2.9 C5.8 4.2 4.6 5 4.3 5.9 H1.7 C1.4 5 0.2 4.2 0.2 2.9 C0.2 1.5 1.2 0.2 3 0.2 Z" fill="url(#bl)"/><rect x="1.7" y="5.8" width="2.6" height="1.4" fill="#c88a30"/><rect x="2.1" y="7.1" width="1.8" height="0.8" fill="#8a7a6a"/></svg>
<div class="t" style="left:695.00px;top:466.90px;font-size:13px;line-height:26px;color:#1e1e1e;transform:scaleX(1.0209);">SoAdSocketSoConModeChgNot</div>
<div class="t" style="left:829.90px;top:482.80px;font-size:13px;line-height:26px;color:#1e1e1e;transform:scaleX(1.0400);">ification :</div>
<svg class="a" style="left:894px;top:481px" width="13" height="13" viewBox="0 0 13 13"><rect x="0.5" y="0.5" width="12" height="12" rx="1.2" fill="#fff" stroke="#6f6f6f" stroke-width="1.1"/></svg>
<svg class="a" style="left:887.5px;top:483.4px" width="6" height="8" viewBox="0 0 6 8"><defs><radialGradient id="bl" cx="0.4" cy="0.3" r="0.7"><stop offset="0" stop-color="#ffe27a"/><stop offset="1" stop-color="#f7b800"/></radialGradient></defs><path d="M3 0.2 C4.8 0.2 5.8 1.5 5.8 2.9 C5.8 4.2 4.6 5 4.3 5.9 H1.7 C1.4 5 0.2 4.2 0.2 2.9 C0.2 1.5 1.2 0.2 3 0.2 Z" fill="url(#bl)"/><rect x="1.7" y="5.8" width="2.6" height="1.4" fill="#c88a30"/><rect x="2.1" y="7.1" width="1.8" height="0.8" fill="#8a7a6a"/></svg>
<svg class="a" style="left:677px;top:510px" width="13" height="13" viewBox="0 0 13 13"><rect x="0.5" y="0.5" width="12" height="12" rx="0.4" fill="#fff" stroke="#5c5c5c" stroke-width="1.1"/><path d="M2.6 6.6 L5 9 L10.2 3.8" stroke="#505050" stroke-width="1.3" fill="none"/></svg>
<div class="t" style="left:717.90px;top:507.10px;font-size:13px;line-height:26px;color:#1e1e1e;">SoAdSocketTpRxBufferMin :</div>
<div class="a" style="left:894px;top:509px;width:208px;height:21px;border:1px solid #a8a8a8;background:#fff;box-sizing:border-box"></div>
<div class="a" style="left:1103px;top:508px;width:17px;height:23px;border:1px solid #b4b4b4;background:#e1e1e1;box-sizing:border-box"></div>
<div class="t" style="left:1106.50px;top:507.20px;font-size:13px;line-height:26px;color:#202020;transform:scaleX(0.9067);">D</div>
<div class="t" style="left:897.20px;top:507.20px;font-size:13px;line-height:26px;color:#1e1e1e;">500</div>
<svg class="a" style="left:887.5px;top:515.5px" width="6" height="8" viewBox="0 0 6 8"><defs><radialGradient id="bl" cx="0.4" cy="0.3" r="0.7"><stop offset="0" stop-color="#ffe27a"/><stop offset="1" stop-color="#f7b800"/></radialGradient></defs><path d="M3 0.2 C4.8 0.2 5.8 1.5 5.8 2.9 C5.8 4.2 4.6 5 4.3 5.9 H1.7 C1.4 5 0.2 4.2 0.2 2.9 C0.2 1.5 1.2 0.2 3 0.2 Z" fill="url(#bl)"/><rect x="1.7" y="5.8" width="2.6" height="1.4" fill="#c88a30"/><rect x="2.1" y="7.1" width="1.8" height="0.8" fill="#8a7a6a"/></svg>
<svg class="a" style="left:677px;top:538px" width="13" height="13" viewBox="0 0 13 13"><rect x="0.5" y="0.5" width="12" height="12" rx="0.4" fill="#fff" stroke="#5c5c5c" stroke-width="1.1"/></svg>
<div class="t" style="left:696.60px;top:530.60px;font-size:13px;line-height:26px;color:#1e1e1e;transform:scaleX(1.0164);">SoAdSocketIpAddrAssignmentC</div>
<div class="t" style="left:744.90px;top:546.80px;font-size:13px;line-height:26px;color:#1e1e1e;transform:scaleX(1.0123);">hgNotifUpperLayerRef :</div>
<div class="a" style="left:894px;top:540px;width:212px;height:22px;background:#cccccc;border:1px solid #c6c6c6;box-sizing:border-box"></div>
<div class="a" style="left:1107px;top:540px;width:17px;height:22px;background:#cccccc;border:1px solid #c4c4c4;box-sizing:border-box"></div>
<div class="a" style="left:1126px;top:540px;width:18px;height:22px;background:#cccccc;border:1px solid #c4c4c4;box-sizing:border-box"></div>
<svg class="a" style="left:1093px;top:548.0px" width="9" height="6" viewBox="0 0 9 6"><path d="M1 1 L4.5 4.5 L8 1" stroke="#bdbdbd" stroke-width="1.1" fill="none"/></svg>
<svg class="a" style="left:1110px;top:547.0px" width="10" height="8" viewBox="0 0 10 8"><circle cx="1.3" cy="1.3" r="0.8" fill="#b4b4b4"/><circle cx="1.3" cy="3.4" r="0.8" fill="#b4b4b4"/><circle cx="1.3" cy="5.6" r="0.8" fill="#b4b4b4"/><path d="M3 1.5 H9.2 M3 3.6 H9.2 M3 5.8 H9.2" stroke="#b8b8b8" stroke-width="0.9"/></svg>
<svg class="a" style="left:1129.5px;top:546.0px" width="10" height="10" viewBox="0 0 10 10"><path d="M5 0.6 V9.4 M0.6 5 H9.4" stroke="#b6b6b6" stroke-width="3"/><path d="M5 0.8 V3" stroke="#dedede" stroke-width="1"/></svg>
<svg class="a" style="left:887.5px;top:547.0px" width="6" height="8" viewBox="0 0 6 8"><defs><radialGradient id="bl" cx="0.4" cy="0.3" r="0.7"><stop offset="0" stop-color="#ffe27a"/><stop offset="1" stop-color="#f7b800"/></radialGradient></defs><path d="M3 0.2 C4.8 0.2 5.8 1.5 5.8 2.9 C5.8 4.2 4.6 5 4.3 5.9 H1.7 C1.4 5 0.2 4.2 0.2 2.9 C0.2 1.5 1.2 0.2 3 0.2 Z" fill="url(#bl)"/><rect x="1.7" y="5.8" width="2.6" height="1.4" fill="#c88a30"/><rect x="2.1" y="7.1" width="1.8" height="0.8" fill="#8a7a6a"/></svg>
<div class="t" style="left:707.00px;top:570.80px;font-size:13px;line-height:26px;color:#1e1e1e;transform:scaleX(0.9913);">SoAdSocketLocalAddressRef :</div>
<div class="a" style="left:894px;top:572px;width:212px;height:22px;border:1px solid #b4b4b4;background:#e1e1e1;box-sizing:border-box"></div>
<div class="a" style="left:1107px;top:572px;width:17px;height:22px;border:1px solid #c2c2c2;background:#e1e1e1;box-sizing:border-box"></div>
<div class="a" style="left:1126px;top:572px;width:18px;height:22px;border:1px solid #c2c2c2;background:#e1e1e1;box-sizing:border-box"></div>
<svg class="a" style="left:1093px;top:580.0px" width="9" height="6" viewBox="0 0 9 6"><path d="M1 1 L4.5 4.5 L8 1" stroke="#444" stroke-width="1.2" fill="none"/></svg>
<svg class="a" style="left:1110px;top:579.8px" width="10" height="8" viewBox="0 0 10 8"><circle cx="1.3" cy="1.3" r="1" fill="#8a3a2a"/><circle cx="1.3" cy="3.4" r="1" fill="#8a3a2a"/><circle cx="1.3" cy="5.6" r="1" fill="#8a3a2a"/><path d="M1.3 1.3 V5.6" stroke="#8a3a2a" stroke-width="0.6"/><path d="M3 1.5 H9.2 M3 3.6 H9.2 M3 5.8 H9.2" stroke="#e2826e" stroke-width="1.1"/></svg>
<svg class="a" style="left:1129.5px;top:578.0px" width="10" height="10" viewBox="0 0 10 10"><path d="M5 0.6 V9.4 M0.6 5 H9.4" stroke="#3f9a3f" stroke-width="3.4"/><path d="M5 1.6 V8.4 M1.6 5 H8.4" stroke="#c9e05a" stroke-width="1.3"/></svg>
<div class="t" style="left:897.70px;top:570.70px;font-size:13px;line-height:26px;color:#1e1e1e;transform:scaleX(1.0053);">TcpIpLocalAddr_Unicast</div>
<svg class="a" style="left:887.5px;top:579.0px" width="6" height="8" viewBox="0 0 6 8"><defs><radialGradient id="bl" cx="0.4" cy="0.3" r="0.7"><stop offset="0" stop-color="#ffe27a"/><stop offset="1" stop-color="#f7b800"/></radialGradient></defs><path d="M3 0.2 C4.8 0.2 5.8 1.5 5.8 2.9 C5.8 4.2 4.6 5 4.3 5.9 H1.7 C1.4 5 0.2 4.2 0.2 2.9 C0.2 1.5 1.2 0.2 3 0.2 Z" fill="url(#bl)"/><rect x="1.7" y="5.8" width="2.6" height="1.4" fill="#c88a30"/><rect x="2.1" y="7.1" width="1.8" height="0.8" fill="#8a7a6a"/></svg>
<svg class="a" style="left:677px;top:602px" width="13" height="13" viewBox="0 0 13 13"><rect x="0.5" y="0.5" width="12" height="12" rx="0.4" fill="#fff" stroke="#5c5c5c" stroke-width="1.1"/></svg>
<div class="t" style="left:695.00px;top:594.80px;font-size:13px;line-height:26px;color:#1e1e1e;transform:scaleX(1.0209);">SoAdSocketSoConModeChgNot</div>
<div class="t" style="left:781.90px;top:610.60px;font-size:13px;line-height:26px;color:#1e1e1e;transform:scaleX(0.9944);">ifUpperLayerRef :</div>
<div class="a" style="left:894px;top:604px;width:212px;height:22px;background:#cccccc;border:1px solid #c6c6c6;box-sizing:border-box"></div>
<div class="a" style="left:1107px;top:604px;width:17px;height:22px;background:#cccccc;border:1px solid #c4c4c4;box-sizing:border-box"></div>
<div class="a" style="left:1126px;top:604px;width:18px;height:22px;background:#cccccc;border:1px solid #c4c4c4;box-sizing:border-box"></div>
<svg class="a" style="left:1093px;top:612.0px" width="9" height="6" viewBox="0 0 9 6"><path d="M1 1 L4.5 4.5 L8 1" stroke="#bdbdbd" stroke-width="1.1" fill="none"/></svg>
<svg class="a" style="left:1110px;top:611.0px" width="10" height="8" viewBox="0 0 10 8"><circle cx="1.3" cy="1.3" r="0.8" fill="#b4b4b4"/><circle cx="1.3" cy="3.4" r="0.8" fill="#b4b4b4"/><circle cx="1.3" cy="5.6" r="0.8" fill="#b4b4b4"/><path d="M3 1.5 H9.2 M3 3.6 H9.2 M3 5.8 H9.2" stroke="#b8b8b8" stroke-width="0.9"/></svg>
<svg class="a" style="left:1129.5px;top:610.0px" width="10" height="10" viewBox="0 0 10 10"><path d="M5 0.6 V9.4 M0.6 5 H9.4" stroke="#b6b6b6" stroke-width="3"/><path d="M5 0.8 V3" stroke="#dedede" stroke-width="1"/></svg>
<svg class="a" style="left:887.5px;top:611.0px" width="6" height="8" viewBox="0 0 6 8"><defs><radialGradient id="bl" cx="0.4" cy="0.3" r="0.7"><stop offset="0" stop-color="#ffe27a"/><stop offset="1" stop-color="#f7b800"/></radialGradient></defs><path d="M3 0.2 C4.8 0.2 5.8 1.5 5.8 2.9 C5.8 4.2 4.6 5 4.3 5.9 H1.7 C1.4 5 0.2 4.2 0.2 2.9 C0.2 1.5 1.2 0.2 3 0.2 Z" fill="url(#bl)"/><rect x="1.7" y="5.8" width="2.6" height="1.4" fill="#c88a30"/><rect x="2.1" y="7.1" width="1.8" height="0.8" fill="#8a7a6a"/></svg>
</body></html>
